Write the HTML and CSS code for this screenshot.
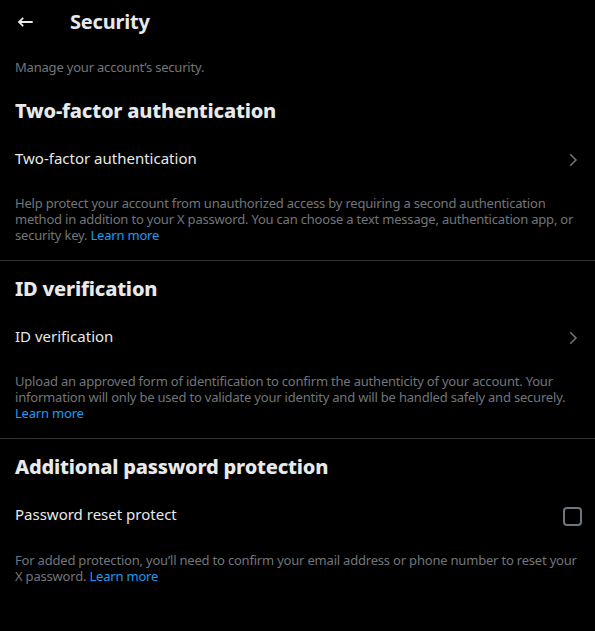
FILE: index.html
```html
<!DOCTYPE html>
<html lang="en">
<head>
<meta charset="utf-8">
<title>Security</title>
<link rel="stylesheet" href="styles.css">
</head>
<body>
<div class="page">
  <header class="topbar">
    <svg class="back" viewBox="0 0 20 20" width="20" height="20" aria-hidden="true">
      <path d="M3 10H16.7M7.2 5.8L3 10L7.2 14.2" fill="none" stroke="#e7e9ea" stroke-width="1.8"/>
    </svg>
    <h1 class="title">Security</h1>
  </header>

  <p class="intro">Manage your account’s security.</p>

  <section class="section">
    <h2 class="sec-title">Two-factor authentication</h2>
    <div class="row">
      <span class="row-label">Two-factor authentication</span>
      <svg class="chev" viewBox="0 0 24 24" width="18" height="18" aria-hidden="true">
        <path d="M14.586 12L7.543 4.96l1.414-1.42L17.414 12l-8.457 8.46-1.414-1.42L14.586 12z" fill="#71767b"/>
      </svg>
    </div>
    <p class="desc">Help protect your account from unauthorized access by requiring a second authentication method in addition to your X password. You can choose a text message, authentication app, or security key. <a class="link" href="#">Learn more</a></p>
  </section>

  <section class="section">
    <h2 class="sec-title">ID verification</h2>
    <div class="row">
      <span class="row-label">ID verification</span>
      <svg class="chev" viewBox="0 0 24 24" width="18" height="18" aria-hidden="true">
        <path d="M14.586 12L7.543 4.96l1.414-1.42L17.414 12l-8.457 8.46-1.414-1.42L14.586 12z" fill="#71767b"/>
      </svg>
    </div>
    <p class="desc">Upload an approved form of identification to confirm the authenticity of your account. Your information will only be used to validate your identity and will be handled safely and securely. <a class="link" href="#">Learn more</a></p>
  </section>

  <section class="section last">
    <h2 class="sec-title">Additional password protection</h2>
    <div class="row row-check">
      <span class="row-label">Password reset protect</span>
      <span class="checkbox"></span>
    </div>
    <p class="desc">For added protection, you’ll need to confirm your email address or phone number to reset your X password. <a class="link" href="#">Learn more</a></p>
  </section>
</div>
</body>
</html>
```
FILE: styles.css
```css
html, body {
  margin: 0;
  padding: 0;
  background: #000;
}
body {
  font-family: "Noto Sans", "Open Sans", sans-serif;
  color: #e7e9ea;
  width: 595px;
  height: 631px;
  overflow: hidden;
}
.page {
  display: flex;
  flex-direction: column;
}
.topbar {
  height: 45px;
  box-sizing: border-box;
  padding: 0 16px 1px 16px;
  display: flex;
  align-items: center;
}
.back {
  flex: none;
  display: block;
}
.title {
  margin: 0 0 0 34px;
  font-size: 20px;
  line-height: 24px;
  font-weight: 700;
  letter-spacing: -0.2px;
  color: #e7e9ea;
}
.intro {
  margin: 0;
  padding: 14px 14px 8px 15px;
  font-size: 13px;
  line-height: 16px;
  color: #71767b;
  letter-spacing: -0.2px;
}
.section {
  border-bottom: 1px solid #2f3336;
}
.section.last {
  border-bottom: none;
}
.sec-title {
  margin: 0;
  padding: 16px 16px 11px 15px;
  font-size: 20px;
  line-height: 24px;
  font-weight: 800;
  letter-spacing: -0.2px;
  color: #e7e9ea;
}
.row {
  display: flex;
  align-items: flex-start;
  justify-content: space-between;
  padding: 14px 13px 14px 15px;
}
.row-label {
  font-size: 15px;
  line-height: 20px;
  color: #e7e9ea;
}
.chev {
  flex: none;
  display: block;
  margin-top: 3px;
}
.checkbox {
  flex: none;
  width: 19px;
  height: 19px;
  box-sizing: border-box;
  border: 2px solid #6e757b;
  border-radius: 4px;
  margin-top: 3px;
}
.desc {
  margin: 0;
  padding: 12px 14px 17px 15px;
  font-size: 13px;
  line-height: 16px;
  color: #71767b;
  letter-spacing: -0.2px;
}
.link {
  display: inline-block;
  line-height: 16px;
  vertical-align: top;
  color: #1d9bf0;
  text-decoration: none;
}
```
